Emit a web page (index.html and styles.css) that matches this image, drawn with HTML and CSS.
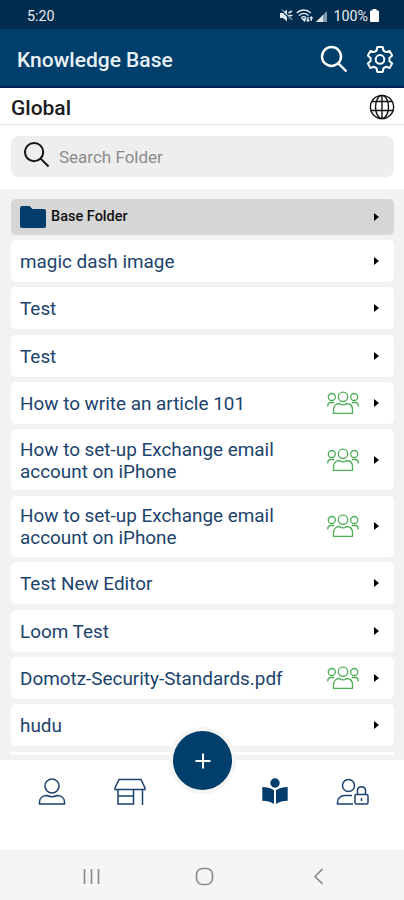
FILE: index.html
```html
<!DOCTYPE html>
<html lang="en">
<head>
    <meta charset="utf-8">
    <meta name="viewport" content="width=device-width, initial-scale=1">
    <title>Knowledge Base</title>
    <link rel="stylesheet" href="styles.css">
</head>
<body>
    <svg class="sprite" width="0" height="0">
        <symbol id="search" viewBox="0 0 28 28">
            <circle cx="11.5" cy="11.5" r="9.5"/>
            <path d="M18.3 18.3L26.5 26.5"/>
        </symbol>
        <symbol id="people" viewBox="0 0 32 24">
            <circle cx="16" cy="5.8" r="4.7"/>
            <circle cx="4.8" cy="6" r="3.5"/>
            <circle cx="27.2" cy="6" r="3.5"/>
            <path d="M6.5 22.3v-3.5c0-4 2.5-6.3 6-6.3 2 1.6 5 1.6 7 0 3.5 0 6 2.3 6 6.3v3.5z"/>
            <path d="M.7 15.5c0-2.5 1-4 3-4h3.5M31.3 15.5c0-2.5-1-4-3-4h-3.5"/>
        </symbol>
    </svg>

    <div class="status-bar">
        <span class="time">5:20</span>
        <div class="status-icons">
            <svg width="13" height="13" viewBox="0 0 13 13">
                <path d="M0 4h3l4-3.5v12L3 9H0z" fill="#dfe7ee"/>
                <path d="M8.5 4l3.5-2M8.5 6.5h4M8.5 9l3 2" stroke="#dfe7ee" stroke-width="1.5"/>
                <path d="M1 1l11 11" stroke="#012c4e" stroke-width="1.2"/>
                <path d="M2 .5l10 10" stroke="#dfe7ee"/>
            </svg>
            <svg width="17" height="13" viewBox="0 0 17 13" fill="none" stroke="#dfe7ee" stroke-width="1.3">
                <path d="M.8 4c4-4 10-4 14 0M3 6.5c3-2.7 6.5-2.7 9.5 0M5.3 8.7c1.5-1.3 3.5-1.3 5 0"/>
                <path d="M6.5 10l2 2 1-2zM12 8v4M10.7 10.7l1.3 1.5 1.3-1.5M15.3 12V8M14 9.5l1.3-1.5 1.3 1.5"/>
            </svg>
            <svg width="12" height="12" viewBox="0 0 12 12">
                <path d="M0 12L11 1v11z" fill="#8299ac"/>
                <path d="M0 12l7-7v7z" fill="#dfe7ee"/>
            </svg>
            <span class="percent">100%</span>
            <svg width="9" height="13" viewBox="0 0 9 13">
                <path d="M2.5 0h4v1.5H8a1 1 0 0 1 1 1V12a1 1 0 0 1-1 1H1a1 1 0 0 1-1-1V2.5a1 1 0 0 1 1-1h1.5z" fill="#fff"/>
            </svg>
        </div>
    </div>

    <header>
        <h1>Knowledge Base</h1>
        <svg class="header-search" width="28" height="28"><use href="#search"/></svg>
        <svg class="gear" width="26" height="28" viewBox="0 0 26 28">
            <path d="M10.3 2h5.4l.8 3.7 2.5 1.4 3.6-1.2 2.6 4.6-2.8 2.5v2.9l2.8 2.5-2.6 4.6-3.6-1.2-2.5 1.4-.8 3.7h-5.4l-.8-3.7L7 21.8 3.4 23 .8 18.4l2.8-2.5V13L.8 10.5l2.6-4.6L7 7.1l2.5-1.4z"/>
            <circle cx="13" cy="14.4" r="4.3"/>
        </svg>
    </header>

    <div class="scope">
        <h2>Global</h2>
        <svg width="26" height="26" viewBox="0 0 26 26">
            <circle cx="13" cy="13" r="11.6"/>
            <ellipse cx="13" cy="13" rx="6.5" ry="11.6"/>
            <path d="M13 1.4v23.2M3 7.5h20M1.4 16.5h23.2"/>
        </svg>
    </div>

    <div class="search-area">
        <div class="search-box">
            <svg width="27" height="27"><use href="#search"/></svg>
            <span>Search Folder</span>
        </div>
    </div>

    <main>
        <div class="folder">
            <svg width="26" height="22" viewBox="0 0 26 22">
                <path d="M2 0h7.5l3 3H24a2 2 0 0 1 2 2v15a2 2 0 0 1-2 2H2a2 2 0 0 1-2-2V2a2 2 0 0 1 2-2z" fill="#023d6b"/>
            </svg>
            <span class="name">Base Folder</span>
            <i class="arrow"></i>
        </div>
        <div class="item"><span class="name">magic dash image</span><i class="arrow"></i></div>
        <div class="item"><span class="name">Test</span><i class="arrow"></i></div>
        <div class="item"><span class="name">Test</span><i class="arrow"></i></div>
        <div class="item">
            <span class="name">How to write an article 101</span>
            <svg class="people"><use href="#people"/></svg>
            <i class="arrow"></i>
        </div>
        <div class="item tall">
            <span class="name">How to set-up Exchange email account on iPhone</span>
            <svg class="people"><use href="#people"/></svg>
            <i class="arrow"></i>
        </div>
        <div class="item tall">
            <span class="name">How to set-up Exchange email account on iPhone</span>
            <svg class="people"><use href="#people"/></svg>
            <i class="arrow"></i>
        </div>
        <div class="item"><span class="name">Test New Editor</span><i class="arrow"></i></div>
        <div class="item"><span class="name">Loom Test</span><i class="arrow"></i></div>
        <div class="item">
            <span class="name">Domotz-Security-Standards.pdf</span>
            <svg class="people"><use href="#people"/></svg>
            <i class="arrow"></i>
        </div>
        <div class="item"><span class="name">hudu</span><i class="arrow"></i></div>
        <div class="item next"></div>
    </main>

    <nav class="tabs">
        <svg width="28" height="28" viewBox="0 0 28 28">
            <circle cx="14" cy="8" r="7"/>
            <path d="M1.5 26v-2c0-4 3-6.5 7.5-6.5 3 1.5 7 1.5 10 0 4.5 0 7.5 2.5 7.5 6.5v2z"/>
        </svg>
        <svg width="32" height="28" viewBox="0 0 32 28">
            <path d="M5 1.5h22l4 8.5v1.5H1V10zM4 11.5V26h15.5V11.5M4 18h15.5M28.5 11.5V27"/>
        </svg>
        <button class="add">
            <svg width="16" height="16" viewBox="0 0 16 16"><path d="M8 .5v15M.5 8h15"/></svg>
        </button>
        <svg class="reader" width="26" height="26" viewBox="0 0 26 26">
            <circle cx="13" cy="5" r="4.7"/>
            <path d="M.3 9c4.5 0 8.5 1 11.7 3.3V26C8.5 23.7 4.8 22.8.3 22.8zM25.7 9c-4.5 0-8.5 1-11.7 3.3V26c3.5-2.3 7.2-3.2 11.7-3.2z"/>
        </svg>
        <svg width="33" height="28" viewBox="0 0 33 28">
            <circle cx="12.5" cy="7.5" r="6"/>
            <path d="M17 26H1.5v-1.5c0-4 3-7 7-7H16"/>
            <rect x="19" y="16.5" width="13" height="9.5" rx="1.5"/>
            <path d="M21.5 16.5v-4c0-5 8-5 8 0v4M25.5 20v3"/>
        </svg>
    </nav>

    <div class="system-nav">
        <svg width="17" height="17" viewBox="0 0 17 17"><path d="M1.5 1v15M8.5 1v15M15.5 1v15"/></svg>
        <svg class="home" width="19" height="19" viewBox="0 0 19 19"><rect x="1.5" y="1.5" width="16" height="16" rx="6"/></svg>
        <svg width="11" height="17" viewBox="0 0 11 17"><path d="M9.5 1.2L2 8.5l7.5 7.3"/></svg>
    </div>
</body>
</html>
```
FILE: styles.css
```css
* {
    box-sizing: border-box;
}

body {
    display: flex;
    flex-direction: column;
    height: 900px;
    margin: 0;
    overflow: hidden;
    background-color: #fff;
    font-family: Roboto, sans-serif;
}

svg {
    flex-shrink: 0;
    fill: none;
}

.sprite {
    position: absolute;
}

.status-bar {
    display: flex;
    align-items: center;
    justify-content: space-between;
    height: 29px;
    padding: 2px 25px 0 27px;
    background-color: #012c4e;
    color: #e6edf3;
    font-size: 14.3px;
}

.status-icons {
    display: flex;
    align-items: center;
    gap: 3px;
}

.percent {
    margin-left: 2px;
    margin-right: -1px;
}

header {
    display: flex;
    align-items: center;
    height: 59px;
    padding: 2px 11px 0 17px;
    background-color: #003e6b;
    border-bottom: 2px solid #00205a;
    color: #e9f1f7;
}

h1 {
    flex: 1;
    margin: 0;
    padding-top: 3px;
    font-size: 21px;
    font-weight: 500;
}

.header-search {
    margin-right: 19px;
    stroke: #fff;
    stroke-width: 2.4;
}

.gear {
    stroke: #fff;
    stroke-width: 2;
    stroke-linejoin: round;
}

.scope {
    display: flex;
    align-items: center;
    justify-content: space-between;
    height: 37px;
    padding: 1px 9px 0 11px;
    border-bottom: 1px solid #e3e5e6;
}

.scope svg {
    stroke: #111;
    stroke-width: 1.4;
}

h2 {
    margin: 0;
    padding-top: 2px;
    color: #1b1b1b;
    font-size: 21px;
    font-weight: 500;
}

.search-area {
    height: 64px;
    padding: 11px 10px 0 11px;
}

.search-box {
    display: flex;
    align-items: center;
    gap: 9px;
    height: 41px;
    padding-left: 12px;
    border-radius: 8px;
    background-color: #eee;
    color: #8c8c8c;
    font-size: 17px;
}

.search-box svg {
    margin-top: -5px;
    stroke: #151515;
    stroke-width: 2.1;
}

main {
    display: flex;
    flex: 1;
    flex-direction: column;
    gap: 5.4px;
    min-height: 0;
    padding: 9.5px 10px 0 11px;
    overflow: hidden;
    background-color: #f3f2f0;
}

.folder,
.item {
    display: flex;
    flex-shrink: 0;
    align-items: center;
    height: 42px;
    padding: 0 15px 0 9px;
    border-radius: 5px;
    background-color: #fff;
    color: #1c436c;
    font-size: 18.9px;
    line-height: 22px;
}

.folder {
    height: 36px;
    background-color: #d6d6d6;
    color: #111;
    font-size: 14.5px;
    font-weight: 500;
}

.folder .name {
    padding-left: 5px;
}

.item .name {
    padding-top: 2px;
}

.tall {
    height: 61px;
}

.next {
    height: 3px;
    border-radius: 0;
}

.name {
    flex: 1;
}

.tall .name {
    padding-right: 40px;
}

.people {
    width: 32px;
    height: 24px;
    margin-right: 15px;
    stroke: #4fae58;
    stroke-width: 1.3;
}

.arrow {
    border: 4.5px solid transparent;
    border-left: 5px solid #000;
    border-right: 0;
}

.tabs {
    position: relative;
    display: flex;
    justify-content: space-between;
    height: 90px;
    padding: 18px 35px 0 38px;
    background-color: #fff;
    stroke: #1c426e;
    stroke-width: 1.5;
}

.add {
    position: absolute;
    top: -33px;
    left: 169px;
    display: flex;
    align-items: center;
    justify-content: center;
    width: 67px;
    height: 67px;
    padding: 0;
    border: 4px solid #f5f5f4;
    border-radius: 50%;
    background-color: #003e6b;
    stroke: #fff;
    stroke-width: 2;
}

.reader {
    margin-left: 68px;
    fill: #023d6b;
    stroke: none;
}

.system-nav {
    display: flex;
    align-items: center;
    justify-content: space-between;
    height: 50px;
    padding: 2px 80px 0 83px;
    background-color: #f5f5f5;
    stroke: #8d8d8d;
    stroke-width: 1.7;
}

.home {
    margin-right: 5px;
}
```
